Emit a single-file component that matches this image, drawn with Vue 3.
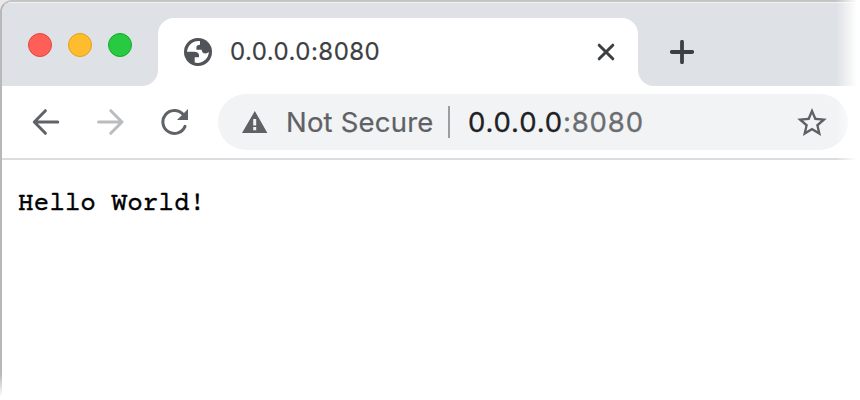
<script setup>
const lights = ['red', 'yellow', 'green']
const host = '0.0.0.0'
const port = ':8080'
</script>

<template>
  <div class="window">
    <div class="frame">
      <header class="tabs">
        <div class="lights"><i v-for="c in lights" :key="c" :class="c"></i></div>
        <div class="tab">
          <svg class="globe" width="28" height="28" viewBox="0 0 28 28">
            <circle cx="14" cy="14" r="14" fill="#505358" />
            <path d="M16 3.2C9.5 2.2 3.7 7 3 13.8h7c3.2 0 5 1.2 5 3.7v1.7h-4.3v5.3c6.9 2 13.6-2.9 14.2-10.4-1.1.9-2.1 1.3-3.4 1.3-2.5 0-3.6-1.1-3.9-3.6h-5.2V9.5c0-2 1.2-2.8 3.6-2.8z" fill="#fff" />
          </svg>
          <span class="title">{{ host + port }}</span>
          <svg class="close" width="18" height="18" viewBox="0 0 18 18"><path d="M2.2 2.2l13.6 13.6M15.8 2.2L2.2 15.8" /></svg>
        </div>
        <svg class="plus" width="24" height="24" viewBox="0 0 24 24"><path d="M12 1.8v20.4M1.8 12h20.4" /></svg>
      </header>
      <nav class="toolbar">
        <svg class="nav" width="28" height="28" viewBox="0 0 28 28"><path d="M25.8 14H3M13.4 2.7L2.3 14l11.1 11.3" /></svg>
        <svg class="nav forward" width="28" height="28" viewBox="0 0 28 28"><path d="M2.5 14H25M14.8 2.7L26 14 14.8 25.3" /></svg>
        <svg class="nav reload" width="28" height="28" viewBox="0 0 28 28"><path d="M22.8 6.1A11.5 11.5 0 1 0 25 18.4" /><path class="solid" d="M28 1v11H17z" /></svg>
        <div class="omnibox">
          <svg class="warn" width="26" height="22" viewBox="0 0 26 22"><path fill-rule="evenodd" d="M12.8 0L25.4 22H0zM11.2 8v6.5h3V8zM11.2 16v3.2h3V16z" fill="#5f6164" /></svg>
          <span class="label">Not Secure</span>
          <span class="divider"></span>
          <span class="url">{{ host }}<span>{{ port }}</span></span>
          <svg class="star" width="30" height="28" viewBox="2 2 20 19"><path d="M22 9.24l-7.19-.62L12 2 9.19 8.63 2 9.24l5.46 4.73L5.82 21 12 17.27 18.18 21l-1.63-7.03L22 9.24zM12 15.4l-3.76 2.27 1-4.28-3.32-2.88 4.38-.38L12 6.1l1.71 4.04 4.38.38-3.32 2.88 1 4.28L12 15.4z" /></svg>
        </div>
      </nav>
      <pre class="page">Hello World!</pre>
    </div>
  </div>
</template>

<style>
body { background: #fff; overflow: hidden; }
</style>

<style scoped>
.window { position: relative; box-sizing: border-box; width: 860px; height: 400px; overflow: hidden; background: #e9e9e9; font-feature-settings: "calt" 0; }
.window::after { content: ""; position: absolute; inset: 0; pointer-events: none; background: linear-gradient(90deg, transparent 836px, #fff 857px), linear-gradient(transparent 374px, #fff 397px); }
.frame { box-sizing: border-box; width: 880px; height: 420px; border: 2px solid #b8b8b8; border-top-color: #c4c4c4; border-radius: 12px; background: #fff; overflow: hidden; }
.tabs { display: flex; height: 84px; background: #dee1e6; box-shadow: inset 0 1px #f2f3f5; }
.lights { display: flex; gap: 16px; width: 156px; box-sizing: border-box; padding: 31px 0 0 26px; }
.lights i { box-sizing: border-box; width: 24px; height: 24px; border-radius: 50%; border: 1px solid; }
.lights .red { background: #ff5f57; border-color: #e2463f; }
.lights .yellow { background: #ffbd2e; border-color: #e1a116; }
.lights .green { background: #28ca42; border-color: #12ac28; }
.tab { position: relative; box-sizing: border-box; display: flex; align-items: center; width: 480px; height: 68px; margin-top: 16px; padding: 0 23px 0 26px; background: #fff; border-radius: 16px 16px 0 0; }
.tab::before, .tab::after { content: ""; position: absolute; bottom: 0; width: 16px; height: 16px; }
.tab::before { left: -16px; background: radial-gradient(circle at 0 0, transparent 15.5px, #fff 16.5px); }
.tab::after { right: -16px; background: radial-gradient(circle at 100% 0, transparent 15.5px, #fff 16.5px); }
.title { margin-left: 18px; flex: 1; font: 24px/32px Inter, sans-serif; letter-spacing: 0.47px; color: #3c4043; -webkit-text-stroke: 0.2px; }
svg { flex: none; fill: none; }
.close, .plus { stroke: #3c4043; stroke-linecap: round; stroke-width: 3; }
.plus { margin: 38px 0 0 32px; stroke-width: 3.8; }
.toolbar { box-sizing: border-box; display: flex; align-items: center; height: 74px; padding-left: 30px; border-bottom: 2px solid #dadce0; }
.nav { margin: 0 36px 1px 0; stroke: #5f6368; stroke-width: 3; stroke-linecap: round; stroke-linejoin: round; }
.forward { stroke: #babcbe; }
.reload { margin-right: 30px; }
.reload .solid { fill: #5f6368; stroke: none; }
.omnibox { box-sizing: border-box; display: flex; align-items: center; width: 630px; height: 56px; padding: 0 21px 0 24px; border-radius: 28px; background: #f1f3f4; }
.label { margin-left: 18px; width: 162px; font: 27.5px/36px Inter, sans-serif; letter-spacing: 0.2px; color: #5f6164; white-space: nowrap; -webkit-text-stroke: 0.2px; }
.divider { width: 2px; height: 32px; background: #9b9da0; }
.url { flex: 1; margin-left: 18px; font: 27.5px/36px Inter, sans-serif; letter-spacing: 0.85px; color: #202124; -webkit-text-stroke: 0.3px; }
.url span { color: #6b6d70; }
.star path { fill: #5f6164; }
.page { margin: 0; padding: 29px 16px; font: 26px/32px "Courier Prime", "FreeMono", "Liberation Mono", monospace; color: #000; -webkit-text-stroke: 0.4px; }
</style>
